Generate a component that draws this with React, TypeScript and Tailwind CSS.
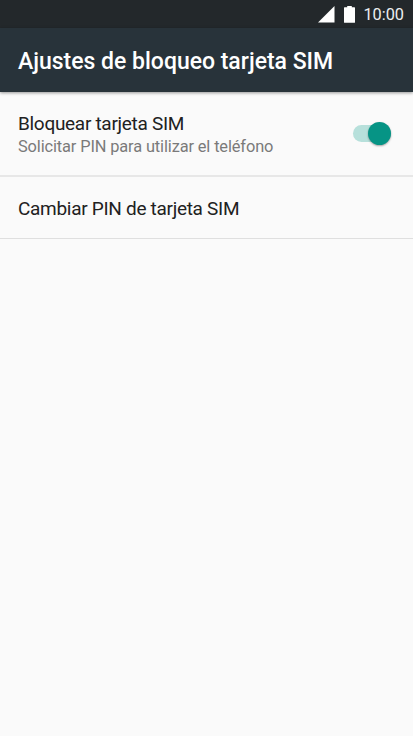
const settings = [
  {
    title: "Bloquear tarjeta SIM",
    summary: "Solicitar PIN para utilizar el teléfono",
    enabled: true,
  },
  { title: "Cambiar PIN de tarjeta SIM" },
];

function StatusBar() {
  return (
    <div className="flex h-7 shrink-0 items-center justify-end bg-[#23282b] pr-[9px] text-[#eceff1]">
      {/* Signal */}
      <svg className="mr-[9px] size-[17px] text-white" viewBox="0 0 17 17" fill="currentColor">
        <path d="M16.5 0v16.5H0z" />
      </svg>
      {/* Battery */}
      <svg className="mr-2 h-[17px] w-[11px] text-white" viewBox="0 0 11 17" fill="currentColor">
        <path d="M3.2 0h4.600v1.200h2.600q.6 0 .6.6v14.400q0 .6-.6.6H.6q-.6 0-.6-.6V1.800q0-.6.6-.6h2.600z" />
      </svg>
      <span className="pt-0.5 text-[16.3px] leading-none">10:00</span>
    </div>
  );
}

function Toggle() {
  return (
    <button
      role="switch"
      aria-checked="true"
      className="mb-px flex h-[17px] w-[38px] items-center justify-end rounded-full bg-[#b7e0db]"
    >
      <span className="size-[23px] shrink-0 rounded-full bg-[#069485] shadow-[0_1px_2px_rgba(0,0,0,0.35)]" />
    </button>
  );
}

export default function App() {
  return (
    <div className="flex h-screen flex-col overflow-hidden bg-[#fafafa] font-['Roboto',sans-serif]">
      <StatusBar />
      <header className="flex h-16 shrink-0 items-center bg-[#28333a] px-[18px] pt-[5px] shadow-[0_1px_3px_rgba(0,0,0,0.4)]">
        <h1 className="whitespace-nowrap text-[23px] font-medium tracking-[-0.01px] text-white">
          Ajustes de bloqueo tarjeta SIM
        </h1>
      </header>
      <ul>
        {settings.map((item) => (
          <li
            key={item.title}
            className="flex items-center justify-between border-b border-[#dfdfdf] pr-[22px] pl-[18px] first:h-[85px] first:border-b-2 first:border-[#e7e7e7] last:h-[62px]"
          >
            <div className="pt-0.5">
              <p className="text-[19px] leading-6 tracking-[-0.3px] text-[#212121]">{item.title}</p>
              {item.summary && (
                <p className="text-[16.4px] leading-[22px] tracking-[-0.13px] text-[#7a7a7a]">
                  {item.summary}
                </p>
              )}
            </div>
            {item.enabled && <Toggle />}
          </li>
        ))}
      </ul>
    </div>
  );
}
